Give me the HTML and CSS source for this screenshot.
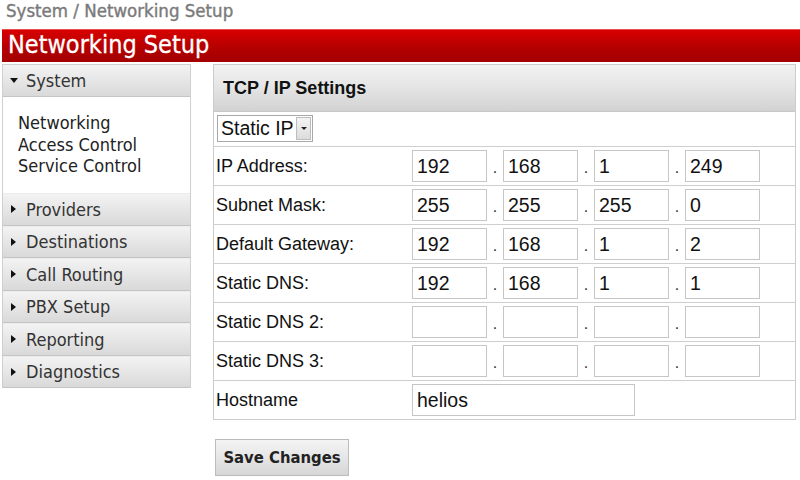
FILE: index.html
```html
<!DOCTYPE html>
<html>
<head>
<meta charset="utf-8">
<title>Networking Setup</title>
<link rel="stylesheet" href="styles.css">
</head>
<body>
<div class="crumb">System / Networking Setup</div>
<div class="titlebar">Networking Setup</div>
<div class="layout">
  <nav class="sidebar">
    <div class="nav-head"><span class="tri-down"></span>System</div>
    <div class="nav-links">
      <div>Networking</div>
      <div>Access Control</div>
      <div>Service Control</div>
    </div>
    <div class="nav-item"><span class="tri-right"></span>Providers</div>
    <div class="nav-item"><span class="tri-right"></span>Destinations</div>
    <div class="nav-item"><span class="tri-right"></span>Call Routing</div>
    <div class="nav-item"><span class="tri-right"></span>PBX Setup</div>
    <div class="nav-item"><span class="tri-right"></span>Reporting</div>
    <div class="nav-item"><span class="tri-right"></span>Diagnostics</div>
  </nav>
  <main class="main">
    <section class="panel">
      <div class="panel-head">TCP / IP Settings</div>
      <div class="row-select">
        <div class="select"><span class="select-text">Static IP</span><span class="select-btn"><span class="tri-small"></span></span></div>
      </div>
      <div class="row">
        <div class="label">IP Address:</div>
        <div class="ip">
          <div class="box">192</div><span class="dot">.</span>
          <div class="box">168</div><span class="dot">.</span>
          <div class="box">1</div><span class="dot">.</span>
          <div class="box">249</div>
        </div>
      </div>
      <div class="row">
        <div class="label">Subnet Mask:</div>
        <div class="ip">
          <div class="box">255</div><span class="dot">.</span>
          <div class="box">255</div><span class="dot">.</span>
          <div class="box">255</div><span class="dot">.</span>
          <div class="box">0</div>
        </div>
      </div>
      <div class="row">
        <div class="label">Default Gateway:</div>
        <div class="ip">
          <div class="box">192</div><span class="dot">.</span>
          <div class="box">168</div><span class="dot">.</span>
          <div class="box">1</div><span class="dot">.</span>
          <div class="box">2</div>
        </div>
      </div>
      <div class="row">
        <div class="label">Static DNS:</div>
        <div class="ip">
          <div class="box">192</div><span class="dot">.</span>
          <div class="box">168</div><span class="dot">.</span>
          <div class="box">1</div><span class="dot">.</span>
          <div class="box">1</div>
        </div>
      </div>
      <div class="row">
        <div class="label">Static DNS 2:</div>
        <div class="ip">
          <div class="box"></div><span class="dot">.</span>
          <div class="box"></div><span class="dot">.</span>
          <div class="box"></div><span class="dot">.</span>
          <div class="box"></div>
        </div>
      </div>
      <div class="row">
        <div class="label">Static DNS 3:</div>
        <div class="ip">
          <div class="box"></div><span class="dot">.</span>
          <div class="box"></div><span class="dot">.</span>
          <div class="box"></div><span class="dot">.</span>
          <div class="box"></div>
        </div>
      </div>
      <div class="row">
        <div class="label">Hostname</div>
        <div class="box wide">helios</div>
      </div>
    </section>
    <div class="button">Save Changes</div>
  </main>
</div>
</body>
</html>
```
FILE: styles.css
```css
* { box-sizing: border-box; }
body {
  margin: 0;
  background: #fff;
  font-family: "DejaVu Sans Condensed", "DejaVu Sans", sans-serif;
  font-stretch: condensed;
  color: #222;
}
.crumb {
  height: 29px;
  padding-left: 6px;
  font-size: 18.5px;
  line-height: 22px;
  color: #7a7a7a;
  -webkit-text-stroke: 0.4px #7a7a7a;
}
.titlebar {
  margin-left: 2px;
  height: 33px;
  padding-left: 6px;
  background: linear-gradient(#d80000, #b20000 60%, #a40000);
  border-top: 1px solid #e85050;
  color: #fff;
  font-size: 25px;
  line-height: 30px;
  -webkit-text-stroke: 0.3px #fff;
}
.layout {
  display: flex;
  align-items: flex-start;
  margin-top: 2px;
  padding-left: 2px;
}
.sidebar {
  width: 189px;
  flex: none;
  border-left: 1px solid #cfcfcf;
  border-right: 1px solid #cfcfcf;
  font-size: 18px;
  color: #333;
}
.nav-head, .nav-item {
  display: flex;
  align-items: center;
  background: linear-gradient(#f3f3f3, #e6e6e6 50%, #d9d9d9);
  border-top: 1px solid #cfcfcf;
  border-bottom: 1px solid #c4c4c4;
}
.nav-head {
  height: 33px;
  padding-left: 7px;
}
.nav-item {
  height: 32.5px;
  padding-left: 8px;
  border-top: 1px solid #ececec;
}
.nav-links {
  height: 96px;
  padding: 15px 0 0 15px;
  line-height: 21.5px;
  background: #fff;
  color: #222;
}
.tri-down {
  width: 0; height: 0;
  border-left: 4px solid transparent;
  border-right: 4px solid transparent;
  border-top: 5px solid #111;
  margin-right: 8px;
}
.tri-right {
  width: 0; height: 0;
  border-top: 4px solid transparent;
  border-bottom: 4px solid transparent;
  border-left: 5px solid #111;
  margin-right: 10px;
}
.main {
  margin-left: 22px;
  width: 583px;
  font-family: "Liberation Sans", Arial, sans-serif;
  font-stretch: normal;
}
.panel {
  border: 1px solid #cccccc;
  background: #fff;
}
.panel-head {
  height: 47px;
  padding-left: 9px;
  display: flex;
  align-items: center;
  background: linear-gradient(#f2f2f2, #e4e4e4 50%, #d2d2d2);
  border-bottom: 1px solid #c8c8c8;
  font-weight: bold;
  font-size: 18px;
  color: #111;
}
.row-select {
  height: 34px;
  padding: 3px 0 0 3px;
}
.select {
  display: flex;
  width: 96px;
  height: 27px;
  border: 1px solid #a8a8a8;
  background: #fff;
}
.select-text {
  flex: 1;
  padding-left: 3px;
  font-size: 19.5px;
  line-height: 25px;
  color: #111;
}
.select-btn {
  width: 15px;
  margin: 1px;
  border: 1px solid #bdbdbd;
  background: linear-gradient(#f4f4f4, #dcdcdc);
  display: flex;
  align-items: center;
  justify-content: center;
}
.tri-small {
  width: 0; height: 0;
  border-left: 3px solid transparent;
  border-right: 3px solid transparent;
  border-top: 3px solid #222;
}
.row {
  display: flex;
  align-items: center;
  height: 39px;
  border-top: 1px solid #cfcfcf;
}
.label {
  width: 198px;
  padding-left: 2px;
  font-size: 18px;
  color: #111;
}
.ip {
  display: flex;
  align-items: center;
}
.box {
  width: 75px;
  height: 32px;
  border: 1px solid #c6c6c6;
  background: #fff;
  padding-left: 4px;
  font-size: 19.5px;
  line-height: 30px;
  color: #111;
}
.box.wide { width: 223px; }
.dot {
  width: 16px;
  text-align: center;
  font-size: 16px;
  line-height: 30px;
  padding-top: 4px;
  color: #333;
}
.button {
  margin: 19px 0 0 2px;
  width: 134px;
  height: 37px;
  display: flex;
  align-items: center;
  justify-content: center;
  border: 1px solid #bcbcbc;
  background: linear-gradient(#f4f4f4, #e6e6e6 50%, #d6d6d6);
  font-family: "DejaVu Sans Condensed", "DejaVu Sans", sans-serif;
  font-stretch: condensed;
  font-weight: bold;
  font-size: 16.5px;
  color: #222;
}
```
